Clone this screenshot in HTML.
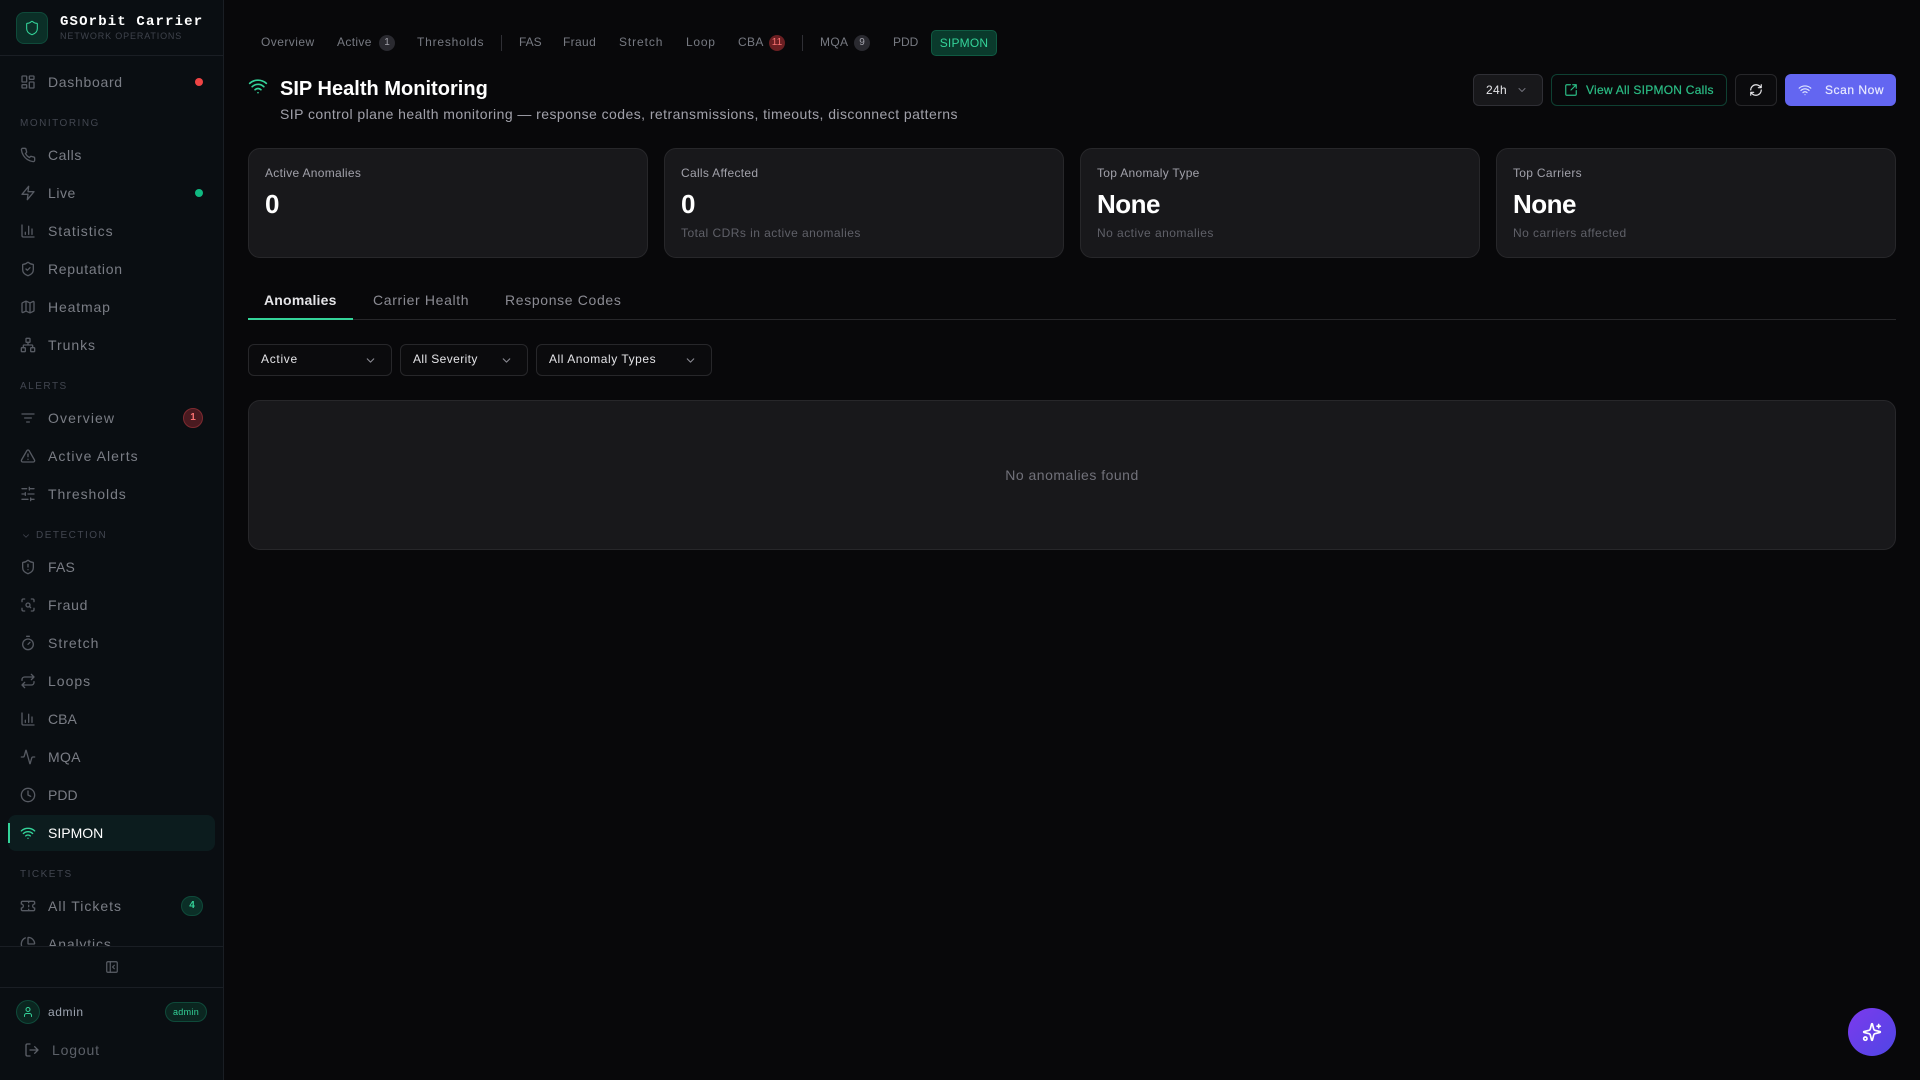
<!DOCTYPE html>
<html lang="en"><head><meta charset="utf-8"><title>SIP Health Monitoring</title>
<style>
*{box-sizing:border-box;margin:0;padding:0}
html,body{width:1920px;height:1080px;overflow:hidden;background:#08080a;font-family:"Liberation Sans",sans-serif}
.a{position:absolute;white-space:nowrap}
.t{position:absolute;white-space:nowrap;line-height:20px;height:20px}
svg{position:absolute;fill:none;stroke-linecap:round;stroke-linejoin:round;stroke-width:2}
#side{position:absolute;left:0;top:0;width:224px;height:1080px;background:#0a0e12;border-right:1px solid #1a1e24}
.n{left:48px;font-size:14px;letter-spacing:.85px;color:#7a7d85}
.c{letter-spacing:.2px}
.i{left:20px;width:16px;height:16px;stroke:#565a62}
.s{left:20px;font-size:10px;letter-spacing:1.5px;color:#424650}
.tb{font-size:12px;letter-spacing:.35px;color:#777a82;top:32px}
.bd{position:absolute;top:35px;width:16px;height:16px;border-radius:50%;background:#2a2a30;color:#a1a1aa;font-size:10px;line-height:16px;text-align:center}
.card{position:absolute;top:148px;width:400px;height:110px;background:#18181b;border:1px solid #27272a;border-radius:12px}
.cl{position:absolute;left:16px;top:14px;font-size:12px;line-height:20px;color:#a1a1aa;letter-spacing:.3px;white-space:nowrap}
.cv{position:absolute;left:16px;top:39px;font-size:26px;line-height:32px;font-weight:700;color:#fff;letter-spacing:-.5px;white-space:nowrap}
.cs{position:absolute;left:16px;top:74px;font-size:12px;line-height:20px;color:#5f6068;letter-spacing:.46px;white-space:nowrap}
.f{position:absolute;top:344px;height:32px;border:1px solid #27272a;border-radius:6px;background:#0b0b0d;color:#e4e4e7;font-size:12px;line-height:29px;padding-left:12px;letter-spacing:.1px;white-space:nowrap}
</style></head><body>
<div id="side">
<div class="a" style="left:0;top:55px;width:223px;height:1px;background:#1a1e24"></div>
<div class="a" style="left:16px;top:12px;width:32px;height:32px;border-radius:8px;background:#0b2f27;border:1px solid #0f4a3a"></div>
<svg style="left:24px;top:20px;stroke:#34d399;stroke-width:1.6" width="16" height="16" viewBox="0 0 24 24"><path d="M20 13c0 5-3.5 7.5-7.66 8.95a1 1 0 0 1-.67-.01C7.5 20.5 4 18 4 13V6a1 1 0 0 1 1-1c2 0 4.5-1.2 6.24-2.72a1.17 1.17 0 0 1 1.52 0C14.51 3.81 17 5 19 5a1 1 0 0 1 1 1z"/></svg>
<div class="a" style="left:60px;top:14px;font:700 14px/16px 'Liberation Mono',monospace;letter-spacing:1.15px;color:#fff">GSOrbit Carrier</div>
<div class="a" style="left:60px;top:29px;font-size:9px;line-height:14px;letter-spacing:.85px;color:#3f434c">NETWORK OPERATIONS</div>

<svg class="i" style="top:74px" viewBox="0 0 24 24"><rect x="3" y="3" width="7" height="9" rx="1"/><rect x="14" y="3" width="7" height="5" rx="1"/><rect x="14" y="12" width="7" height="9" rx="1"/><rect x="3" y="16" width="7" height="5" rx="1"/></svg>
<div class="t n" style="top:72px;letter-spacing:.7px">Dashboard</div>
<div class="a" style="left:195px;top:78px;width:8px;height:8px;border-radius:50%;background:#ef4444"></div>

<div class="t s" style="top:114px">MONITORING</div>
<svg class="i" style="top:147px" viewBox="0 0 24 24"><path d="M22 16.92v3a2 2 0 0 1-2.18 2 19.79 19.79 0 0 1-8.63-3.07 19.5 19.5 0 0 1-6-6 19.79 19.79 0 0 1-3.07-8.67A2 2 0 0 1 4.11 2h3a2 2 0 0 1 2 1.72 12.84 12.84 0 0 0 .7 2.81 2 2 0 0 1-.45 2.11L8.09 9.91a16 16 0 0 0 6 6l1.27-1.27a2 2 0 0 1 2.11-.45 12.84 12.84 0 0 0 2.81.7A2 2 0 0 1 22 16.92z"/></svg>
<div class="t n" style="top:145px;letter-spacing:.55px">Calls</div>
<svg class="i" style="top:185px" viewBox="0 0 24 24"><path d="M13 2 3 14h9l-1 8 10-12h-9z"/></svg>
<div class="t n" style="top:183px;letter-spacing:.55px">Live</div>
<div class="a" style="left:195px;top:189px;width:8px;height:8px;border-radius:50%;background:#10b981"></div>
<svg class="i" style="top:223px" viewBox="0 0 24 24"><path d="M3 3v16a2 2 0 0 0 2 2h16M18 17V9M13 17V5M8 17v-3"/></svg>
<div class="t n" style="top:221px;letter-spacing:.95px">Statistics</div>
<svg class="i" style="top:261px" viewBox="0 0 24 24"><path d="M20 13c0 5-3.5 7.5-7.66 8.95a1 1 0 0 1-.67-.01C7.5 20.5 4 18 4 13V6a1 1 0 0 1 1-1c2 0 4.5-1.2 6.24-2.72a1.17 1.17 0 0 1 1.52 0C14.51 3.81 17 5 19 5a1 1 0 0 1 1 1z"/><path d="m9 12 2 2 4-4"/></svg>
<div class="t n" style="top:259px;letter-spacing:.7px">Reputation</div>
<svg class="i" style="top:299px" viewBox="0 0 24 24"><path d="M14.106 5.553a2 2 0 0 0 1.788 0l3.659-1.83A1 1 0 0 1 21 4.619v12.764a1 1 0 0 1-.553.894l-4.553 2.277a2 2 0 0 1-1.788 0l-4.212-2.106a2 2 0 0 0-1.788 0l-3.659 1.83A1 1 0 0 1 3 19.381V6.618a1 1 0 0 1 .553-.894l4.553-2.277a2 2 0 0 1 1.788 0zM15 5.764v15M9 3.236v15"/></svg>
<div class="t n" style="top:297px;letter-spacing:.85px">Heatmap</div>
<svg class="i" style="top:337px" viewBox="0 0 24 24"><rect x="16" y="16" width="6" height="6" rx="1"/><rect x="2" y="16" width="6" height="6" rx="1"/><rect x="9" y="2" width="6" height="6" rx="1"/><path d="M5 16v-3a1 1 0 0 1 1-1h12a1 1 0 0 1 1 1v3M12 12V8"/></svg>
<div class="t n" style="top:335px;letter-spacing:.95px">Trunks</div>

<div class="t s" style="top:377px">ALERTS</div>
<svg class="i" style="top:410px" viewBox="0 0 24 24"><path d="M3 6h18M7 12h10M10 18h4"/></svg>
<div class="t n" style="top:408px;letter-spacing:1.1px">Overview</div>
<div class="a" style="left:183px;top:408px;width:20px;height:20px;border-radius:50%;background:#4a1a20;border:1px solid #7f2a30;color:#f87171;font-size:10px;font-weight:700;line-height:18px;text-align:center">1</div>
<svg class="i" style="top:448px" viewBox="0 0 24 24"><path d="m21.73 18-8-14a2 2 0 0 0-3.48 0l-8 14A2 2 0 0 0 4 21h16a2 2 0 0 0 1.73-3M12 9v4M12 17h.01"/></svg>
<div class="t n" style="top:446px;letter-spacing:1.05px">Active Alerts</div>
<svg class="i" style="top:486px" viewBox="0 0 24 24"><path d="M21 4h-7M10 4H3M21 12h-9M8 12H3M21 20h-5M12 20H3M14 2v4M8 10v4M16 18v4"/></svg>
<div class="t n" style="top:484px;letter-spacing:.95px">Thresholds</div>

<svg style="left:21px;top:531px;stroke:#424650" width="10" height="10" viewBox="0 0 24 24"><path d="m6 9 6 6 6-6"/></svg>
<div class="t s" style="left:36px;top:526px">DETECTION</div>
<svg class="i" style="top:559px" viewBox="0 0 24 24"><path d="M20 13c0 5-3.5 7.5-7.66 8.95a1 1 0 0 1-.67-.01C7.5 20.5 4 18 4 13V6a1 1 0 0 1 1-1c2 0 4.5-1.2 6.24-2.72a1.17 1.17 0 0 1 1.52 0C14.51 3.81 17 5 19 5a1 1 0 0 1 1 1z"/><path d="M12 8v4M12 16h.01"/></svg>
<div class="t n c" style="top:557px">FAS</div>
<svg class="i" style="top:597px" viewBox="0 0 24 24"><path d="M3 7V5a2 2 0 0 1 2-2h2M17 3h2a2 2 0 0 1 2 2v2M21 17v2a2 2 0 0 1-2 2h-2M7 21H5a2 2 0 0 1-2-2v-2"/><circle cx="12" cy="12" r="3"/><path d="m16 16-1.9-1.9"/></svg>
<div class="t n" style="top:595px;letter-spacing:.7px">Fraud</div>
<svg class="i" style="top:635px" viewBox="0 0 24 24"><path d="M10 2h4M12 14l3-3"/><circle cx="12" cy="14" r="8"/></svg>
<div class="t n" style="top:633px;letter-spacing:1px">Stretch</div>
<svg class="i" style="top:673px" viewBox="0 0 24 24"><path d="m17 2 4 4-4 4M3 11v-1a4 4 0 0 1 4-4h14M7 22l-4-4 4-4M21 13v1a4 4 0 0 1-4 4H3"/></svg>
<div class="t n" style="top:671px;letter-spacing:1px">Loops</div>
<svg class="i" style="top:711px" viewBox="0 0 24 24"><path d="M3 3v16a2 2 0 0 0 2 2h16M18 17V9M13 17V5M8 17v-3"/></svg>
<div class="t n" style="top:709px;letter-spacing:0">CBA</div>
<svg class="i" style="top:749px" viewBox="0 0 24 24"><path d="M22 12h-2.48a2 2 0 0 0-1.93 1.46l-2.35 8.36a.25.25 0 0 1-.48 0L9.24 2.18a.25.25 0 0 0-.48 0l-2.35 8.36A2 2 0 0 1 4.49 12H2"/></svg>
<div class="t n" style="top:747px;letter-spacing:.3px">MQA</div>
<svg class="i" style="top:787px" viewBox="0 0 24 24"><circle cx="12" cy="12" r="10"/><path d="M12 6v6l4 2"/></svg>
<div class="t n" style="top:785px;letter-spacing:0">PDD</div>
<div class="a" style="left:8px;top:815px;width:207px;height:36px;border-radius:8px;background:#0c1c1e"></div>
<div class="a" style="left:8px;top:823px;width:2px;height:20px;background:#34d399"></div>
<svg class="i" style="top:825px;stroke:#34d399" viewBox="0 0 24 24"><path d="M12 20h.01M2 8.82a15 15 0 0 1 20 0M5 12.859a10 10 0 0 1 14 0M8.5 16.429a5 5 0 0 1 7 0"/></svg>
<div class="t n" style="top:823px;color:#fff;letter-spacing:0">SIPMON</div>

<div class="t s" style="top:865px">TICKETS</div>
<svg class="i" style="top:898px" viewBox="0 0 24 24"><path d="M2 9a3 3 0 0 1 0 6v2a2 2 0 0 0 2 2h16a2 2 0 0 0 2-2v-2a3 3 0 0 1 0-6V7a2 2 0 0 0-2-2H4a2 2 0 0 0-2 2ZM13 5v2M13 17v2M13 11v2"/></svg>
<div class="t n" style="top:896px;letter-spacing:1px">All Tickets</div>
<div class="a" style="left:181px;top:896px;width:22px;height:20px;border-radius:10px;background:#0b2f27;border:1px solid #0f4a3a;color:#34d399;font-size:10px;font-weight:700;line-height:18px;text-align:center">4</div>
<div class="a" style="left:0;top:926px;width:223px;height:20px;overflow:hidden">
<svg class="i" style="top:10px" viewBox="0 0 24 24"><path d="M21 12c.552 0 1.005-.449.95-.998a10 10 0 0 0-8.953-8.951c-.55-.055-.998.398-.998.95v8a1 1 0 0 0 1 1zM21.21 15.89A10 10 0 1 1 8 2.83"/></svg>
<div class="t n" style="top:8px;letter-spacing:.85px">Analytics</div>
</div>

<div class="a" style="left:0;top:946px;width:223px;height:1px;background:#1a1e24"></div>
<svg style="left:105px;top:960px;stroke:#5c6068" width="14" height="14" viewBox="0 0 24 24"><rect x="3" y="3" width="18" height="18" rx="2"/><path d="M9 3v18M16 15l-3-3 3-3"/></svg>
<div class="a" style="left:0;top:987px;width:223px;height:1px;background:#1a1e24"></div>
<div class="a" style="left:16px;top:1000px;width:24px;height:24px;border-radius:50%;background:#0b2620;border:1px solid #0f4a3a"></div>
<svg style="left:22px;top:1006px;stroke:#34d399" width="12" height="12" viewBox="0 0 24 24"><path d="M19 21v-2a4 4 0 0 0-4-4H9a4 4 0 0 0-4 4v2"/><circle cx="12" cy="7" r="4"/></svg>
<div class="t" style="left:48px;top:1002px;font-size:12px;letter-spacing:.6px;color:#9ca3af">admin</div>
<div class="a" style="left:165px;top:1002px;width:42px;height:20px;border-radius:10px;background:#0b2620;border:1px solid #0f4a3a;color:#34d399;font-size:9px;line-height:18px;text-align:center;letter-spacing:.3px">admin</div>
<svg style="left:24px;top:1042px;stroke:#5c6068" width="16" height="16" viewBox="0 0 24 24"><path d="M9 21H5a2 2 0 0 1-2-2V5a2 2 0 0 1 2-2h4M16 17l5-5-5-5M21 12H9"/></svg>
<div class="t" style="left:52px;top:1040px;font-size:14px;letter-spacing:.85px;color:#5c6068">Logout</div>
</div>

<div class="t tb" style="left:261px;letter-spacing:.45px">Overview</div>
<div class="t tb" style="left:337px">Active</div>
<div class="bd" style="left:379px">1</div>
<div class="t tb" style="left:417px;letter-spacing:.8px">Thresholds</div>
<div class="a" style="left:501px;top:35px;width:1px;height:16px;background:#2f2f35"></div>
<div class="t tb" style="left:519px;letter-spacing:0">FAS</div>
<div class="t tb" style="left:563px">Fraud</div>
<div class="t tb" style="left:619px;letter-spacing:.9px">Stretch</div>
<div class="t tb" style="left:686px;letter-spacing:.75px">Loop</div>
<div class="t tb" style="left:738px">CBA</div>
<div class="bd" style="left:769px;background:#6b1f22;color:#f87171">11</div>
<div class="a" style="left:802px;top:35px;width:1px;height:16px;background:#2f2f35"></div>
<div class="t tb" style="left:820px">MQA</div>
<div class="bd" style="left:854px">9</div>
<div class="t tb" style="left:893px;letter-spacing:0">PDD</div>
<div class="a" style="left:931px;top:30px;width:66px;height:26px;border-radius:5px;background:#0a3a2c;border:1px solid #0f5a42;color:#34d399;font-size:12px;line-height:24px;text-align:center;letter-spacing:.2px">SIPMON</div>

<svg style="left:248px;top:76px;stroke:#34d399" width="20" height="20" viewBox="0 0 24 24"><path d="M12 20h.01M2 8.82a15 15 0 0 1 20 0M5 12.859a10 10 0 0 1 14 0M8.5 16.429a5 5 0 0 1 7 0"/></svg>
<div class="a" style="left:280px;top:75px;font-size:20px;line-height:28px;font-weight:700;color:#fff;letter-spacing:.02px">SIP Health Monitoring</div>
<div class="a" style="left:280px;top:104px;font-size:14px;line-height:20px;color:#a1a1aa;letter-spacing:.44px">SIP control plane health monitoring — response codes, retransmissions, timeouts, disconnect patterns</div>

<div class="a" style="left:1473px;top:74px;width:70px;height:32px;border-radius:6px;background:#18181b;border:1px solid #2f2f35;color:#e4e4e7;font-size:12px;line-height:30px;padding-left:12px;letter-spacing:.3px">24h</div>
<svg style="left:1516px;top:84px;stroke:#71717a" width="12" height="12" viewBox="0 0 24 24"><path d="m6 9 6 6 6-6"/></svg>
<div class="a" style="left:1551px;top:74px;width:176px;height:32px;border-radius:6px;border:1px solid #0f4032"></div>
<svg style="left:1564px;top:83px;stroke:#2bbd85" width="14" height="14" viewBox="0 0 24 24"><path d="M21 13v6a2 2 0 0 1-2 2H5a2 2 0 0 1-2-2V5a2 2 0 0 1 2-2h6M21 3l-9 9M15 3h6v6"/></svg>
<div class="t" style="left:1586px;top:80px;font-size:12px;color:#2bbd85;letter-spacing:.25px;-webkit-text-stroke:.2px #2bbd85">View All SIPMON Calls</div>
<div class="a" style="left:1735px;top:74px;width:42px;height:32px;border-radius:6px;background:#0b0b0d;border:1px solid #27272a"></div>
<svg style="left:1749px;top:83px;stroke:#e4e4e7" width="14" height="14" viewBox="0 0 24 24"><path d="M3 12a9 9 0 0 1 9-9 9.75 9.75 0 0 1 6.74 2.74L21 8M21 3v5h-5M21 12a9 9 0 0 1-9 9 9.75 9.75 0 0 1-6.74-2.74L3 16M8 16H3v5"/></svg>
<div class="a" style="left:1785px;top:74px;width:111px;height:32px;border-radius:6px;background:#6366f1"></div>
<svg style="left:1798px;top:83px;stroke:#e0e7ff" width="14" height="14" viewBox="0 0 24 24"><path d="M12 20h.01M2 8.82a15 15 0 0 1 20 0M5 12.859a10 10 0 0 1 14 0M8.5 16.429a5 5 0 0 1 7 0"/></svg>
<div class="t" style="left:1825px;top:80px;font-size:12px;color:#e8eaff;letter-spacing:.55px;-webkit-text-stroke:.2px #e8eaff">Scan Now</div>

<div class="card" style="left:248px"><div class="cl">Active Anomalies</div><div class="cv">0</div></div>
<div class="card" style="left:664px"><div class="cl">Calls Affected</div><div class="cv">0</div><div class="cs">Total CDRs in active anomalies</div></div>
<div class="card" style="left:1080px"><div class="cl">Top Anomaly Type</div><div class="cv">None</div><div class="cs">No active anomalies</div></div>
<div class="card" style="left:1496px"><div class="cl">Top Carriers</div><div class="cv">None</div><div class="cs">No carriers affected</div></div>

<div class="t" style="left:264px;top:290px;font-size:14px;font-weight:700;color:#e4e4e7;letter-spacing:.2px">Anomalies</div>
<div class="t" style="left:373px;top:290px;font-size:14px;color:#8b8b93;letter-spacing:.65px">Carrier Health</div>
<div class="t" style="left:505px;top:290px;font-size:14px;color:#8b8b93;letter-spacing:.65px">Response Codes</div>
<div class="a" style="left:248px;top:319px;width:1648px;height:1px;background:#27272a"></div>
<div class="a" style="left:248px;top:318px;width:105px;height:2px;background:#34d399"></div>

<div class="f" style="left:248px;width:144px;letter-spacing:.7px">Active</div>
<svg style="left:364px;top:354px;stroke:#8b8b93" width="13" height="13" viewBox="0 0 24 24"><path d="m6 9 6 6 6-6"/></svg>
<div class="f" style="left:400px;width:128px;letter-spacing:.4px">All Severity</div>
<svg style="left:500px;top:354px;stroke:#8b8b93" width="13" height="13" viewBox="0 0 24 24"><path d="m6 9 6 6 6-6"/></svg>
<div class="f" style="left:536px;width:176px;letter-spacing:.55px">All Anomaly Types</div>
<svg style="left:684px;top:354px;stroke:#8b8b93" width="13" height="13" viewBox="0 0 24 24"><path d="m6 9 6 6 6-6"/></svg>

<div class="a" style="left:248px;top:400px;width:1648px;height:150px;background:#18181b;border:1px solid #27272a;border-radius:12px;color:#71717a;font-size:14px;line-height:148px;text-align:center;letter-spacing:.5px">No anomalies found</div>

<div class="a" style="left:1848px;top:1008px;width:48px;height:48px;border-radius:50%;background:linear-gradient(135deg,#7c3aed,#4f46e5)"></div>
<svg style="left:1862px;top:1022px;stroke:#fff" width="20" height="20" viewBox="0 0 24 24"><path d="M9.937 15.5A2 2 0 0 0 8.5 14.063l-6.135-1.582a.5.5 0 0 1 0-.962L8.5 9.936A2 2 0 0 0 9.937 8.5l1.582-6.135a.5.5 0 0 1 .963 0L14.063 8.5A2 2 0 0 0 15.5 9.937l6.135 1.581a.5.5 0 0 1 0 .964L15.5 14.063a2 2 0 0 0-1.437 1.437l-1.582 6.135a.5.5 0 0 1-.963 0zM20 3v4M22 5h-4"/><circle cx="4" cy="20" r="2"/></svg>
</body></html>
